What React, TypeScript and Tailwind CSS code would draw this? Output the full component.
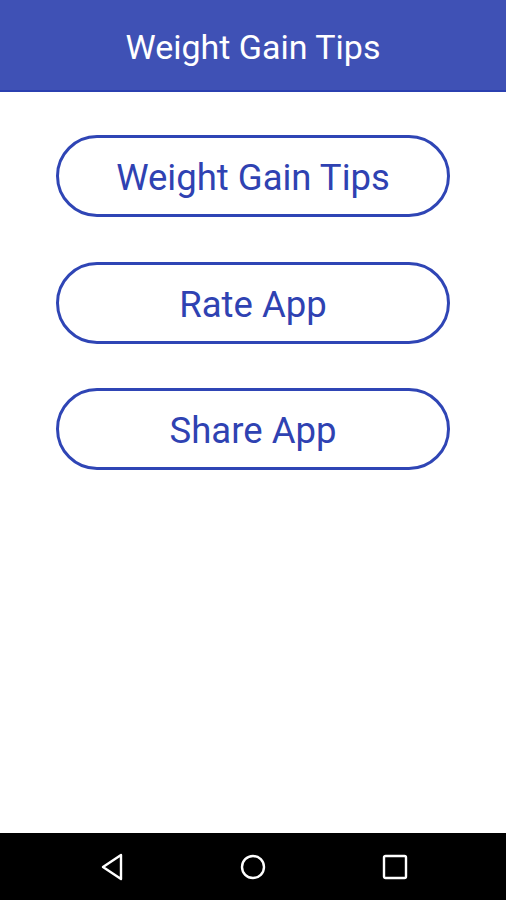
import React from 'react';

const items = ['Weight Gain Tips', 'Rate App', 'Share App'];

const App: React.FC = () => {
  return (
    <div className="flex h-[900px] w-[506px] flex-col bg-white" style={{ fontFamily: 'Roboto, "Noto Sans", sans-serif' }}>
      {/* Toolbar */}
      <header className="flex h-[92px] shrink-0 items-center justify-center border-b-2 border-[#2b40b0] bg-[#3f51b5] pt-[5px]">
        <h1 className="text-[34px] font-normal text-white">Weight Gain Tips</h1>
      </header>

      {/* Menu buttons */}
      <main className="flex flex-1 flex-col items-center gap-[44.5px] pt-[43px]">
        {items.map((label) => (
          <button
            key={label}
            className="flex h-[82px] w-[394px] items-center justify-center rounded-full border-[3px] border-[#2f45b5] bg-white pt-[5px] text-[36.5px] text-[#2f42b2]"
          >
            {label}
          </button>
        ))}
      </main>

      {/* Android nav bar */}
      <nav className="flex h-[67px] shrink-0 items-center bg-black">
        <div className="flex w-full items-center justify-between pl-[100px] pr-[98px]">
          <svg width="24" height="28" viewBox="0 0 24 28" fill="none">
            <path d="M21 2 L3 14 L21 26 Z" stroke="white" strokeWidth="2.4" strokeLinejoin="round" />
          </svg>
          <svg width="26" height="26" viewBox="0 0 26 26" fill="none">
            <circle cx="13" cy="13" r="11" stroke="white" strokeWidth="2.4" />
          </svg>
          <svg width="26" height="26" viewBox="0 0 26 26" fill="none">
            <rect x="2" y="2" width="22" height="22" rx="1.5" stroke="white" strokeWidth="2.4" />
          </svg>
        </div>
      </nav>
    </div>
  );
};

export default App;
